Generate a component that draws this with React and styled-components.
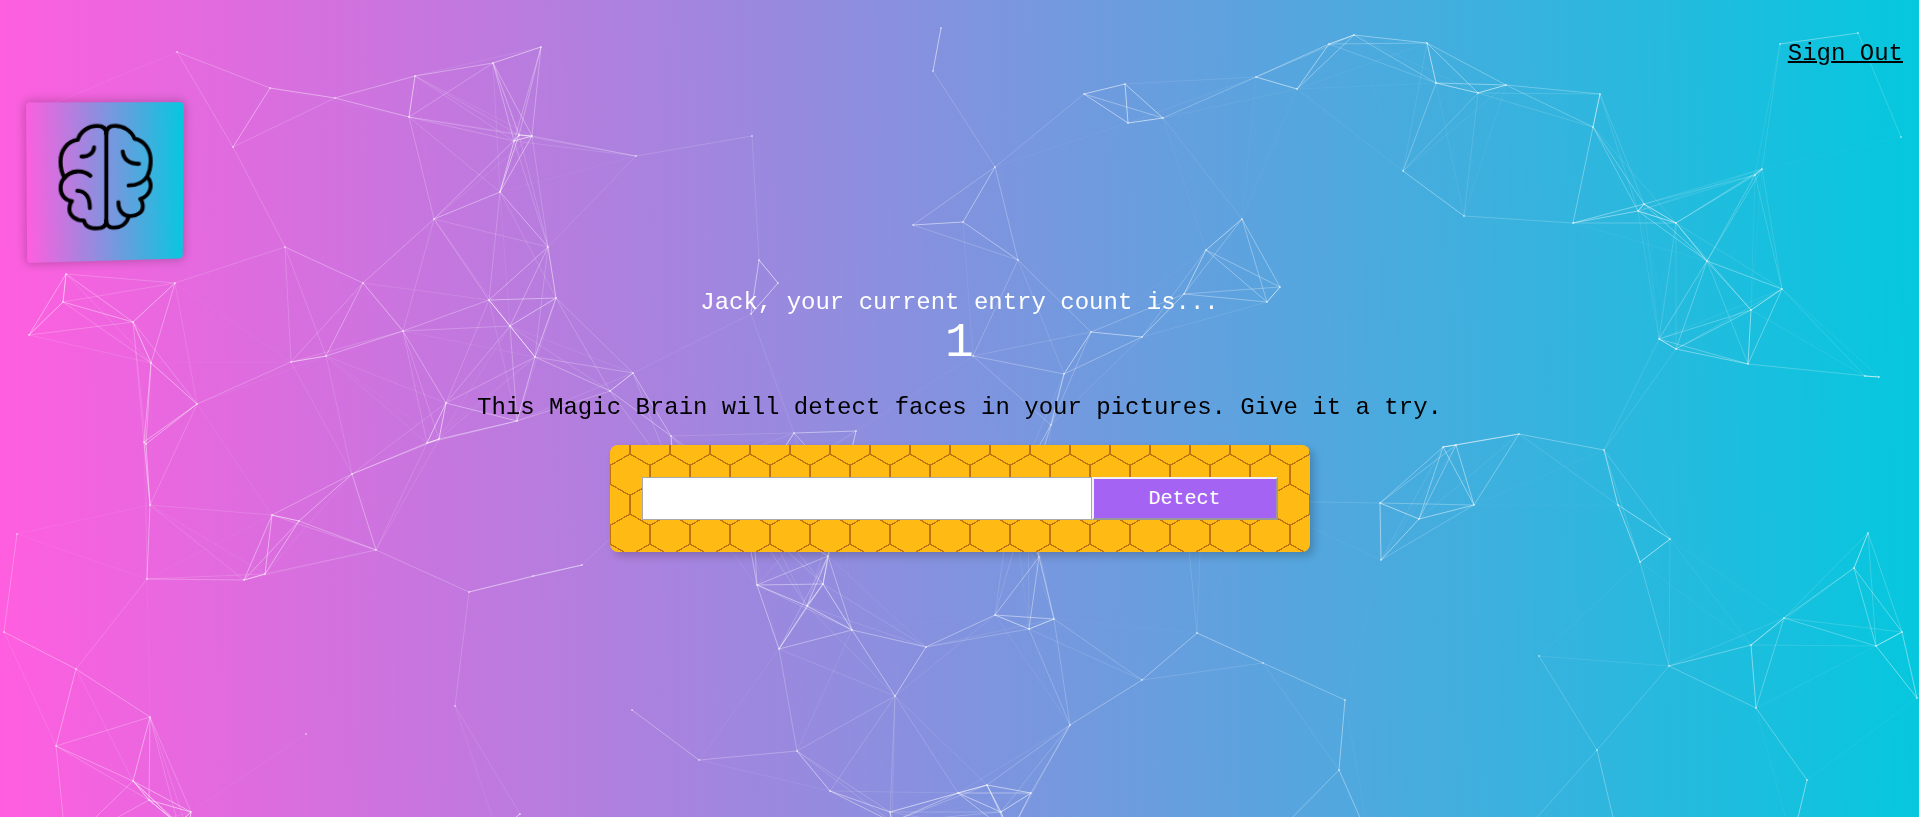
import React from "react";
import styled, { createGlobalStyle } from "styled-components";

const GlobalStyle = createGlobalStyle`
  * { box-sizing: border-box; }
  body {
    margin: 0;
    min-height: 100vh;
    font-family: "Courier New", "Liberation Mono", monospace;
    background: linear-gradient(89deg, #ff5edf 0%, #04c8de 100%) fixed;
  }
`;

const FIELD_WIDTH = 1919;
const FIELD_HEIGHT = 817;
const LINK_DISTANCE = 150;
const LINK_STRENGTH = 0.75;

const PARTICLES = [
  [52, 104], [177, 52], [270, 88], [233, 147], [335, 98], [415, 76], [409, 117],
  [493, 63], [541, 47], [519, 135], [532, 136], [514, 141], [636, 156],
  [500, 192], [434, 219], [548, 247], [285, 247], [363, 283], [66, 274],
  [63, 302], [29, 335], [175, 283], [133, 322], [151, 363], [197, 404],
  [291, 362], [326, 356], [403, 331], [489, 300], [556, 298], [510, 326],
  [535, 357], [633, 373], [610, 391], [446, 403],
  [941, 28], [933, 71], [752, 136], [995, 167], [1084, 94], [1125, 84],
  [1128, 123], [1163, 118], [1256, 77], [913, 225], [963, 222], [1018, 260],
  [759, 260], [778, 283], [751, 314], [973, 356], [1091, 332], [1142, 337],
  [1064, 374], [1242, 219], [1206, 250], [1184, 294], [1267, 302], [1280, 287],
  [1329, 44], [1354, 35], [1427, 43], [1297, 89], [1436, 83], [1478, 93],
  [1506, 85], [1600, 94], [1593, 127], [1403, 171], [1464, 216], [1573, 223],
  [1644, 204], [1638, 211], [1676, 223], [1755, 175], [1762, 169], [1780, 44],
  [1858, 33], [1901, 137], [1707, 261], [1782, 289], [1751, 310], [1659, 339],
  [1676, 349], [1748, 364], [1865, 376], [1879, 377],
  [144, 442], [146, 444], [150, 505], [17, 534], [147, 579], [272, 515],
  [299, 521], [265, 574], [244, 580], [352, 474], [376, 550], [427, 443],
  [439, 439], [517, 421], [469, 592], [533, 576], [582, 565], [4, 632],
  [76, 669], [150, 717], [56, 746], [133, 781], [149, 800], [191, 812],
  [306, 734], [455, 706], [520, 814], [632, 710],
  [671, 436], [794, 433], [856, 431], [1051, 425], [828, 556], [757, 585],
  [823, 584], [807, 606], [779, 649], [852, 630], [926, 647], [995, 615],
  [1029, 629], [1054, 619], [1039, 557], [1197, 633], [1142, 680], [1263, 663],
  [895, 696], [1070, 725], [699, 760], [797, 751], [830, 791], [890, 812],
  [958, 793], [987, 785], [1031, 793], [1001, 812],
  [1443, 447], [1456, 445], [1519, 434], [1604, 450], [1380, 503], [1474, 505],
  [1419, 519], [1381, 560], [1618, 505], [1670, 539], [1640, 562], [1539, 656],
  [1669, 666], [1751, 645], [1784, 618], [1854, 568], [1868, 533], [1876, 646],
  [1902, 632], [1917, 698], [1756, 708], [1807, 780], [1345, 700], [1339, 770],
  [1597, 750],
  [674, 478], [744, 512], [752, 496], [843, 487], [1012, 494], [1028, 500],
  [1185, 508], [1202, 500], [1255, 501],
  [66, 846], [178, 824], [188, 832], [497, 832], [892, 822], [1010, 834],
  [1278, 832], [1369, 838], [1522, 834], [1618, 838], [1792, 842],
];

const LINKS = PARTICLES.flatMap(([x1, y1], i) =>
  PARTICLES.slice(i + 1).flatMap(([x2, y2]) => {
    const distance = Math.hypot(x2 - x1, y2 - y1);
    return distance < LINK_DISTANCE
      ? [{ x1, y1, x2, y2, alpha: LINK_STRENGTH * (1 - distance / LINK_DISTANCE) }]
      : [];
  })
);

const ParticleField = styled.svg`
  position: fixed;
  inset: 0;
  width: 100%;
  height: 100%;
  z-index: -1;
`;

const Nav = styled.nav`
  display: flex;
  justify-content: flex-end;
  padding: 40px 16px;
`;

const SignOutLink = styled.a`
  color: #000;
  font-size: 24px;
  line-height: 27px;
  text-decoration: underline;
  text-decoration-thickness: 2px;
  &:hover { opacity: 0.5; }
`;

const LogoTile = styled.div`
  display: flex;
  justify-content: center;
  align-items: flex-start;
  width: 150px;
  height: 150px;
  margin: 0 31px 32px;
  padding-top: 20px;
  border-radius: 4px;
  background: linear-gradient(89deg, #ff5edf 0%, #04c8de 100%);
  box-shadow: 0 0 8px 2px rgba(0, 0, 0, 0.2);
  transform: perspective(1000px) rotateX(-5deg) rotateY(10deg) scale(1.06);
`;

const BrainIcon = styled.svg`
  width: 90px;
  height: 101px;
  fill: none;
  stroke: #000;
  stroke-width: 12;
  stroke-linecap: round;
  stroke-linejoin: round;
`;

const Main = styled.main`
  text-align: center;
`;

const EntryLabel = styled.div`
  color: #fff;
  font-size: 24px;
  line-height: 27px;
`;

const EntryCount = styled.div`
  color: #fff;
  font-size: 48px;
  line-height: 54px;
`;

const Intro = styled.p`
  margin: 24px 0;
  color: #000;
  font-size: 24px;
  line-height: 27px;
`;

const HoneycombCard = styled.div`
  position: relative;
  width: 100%;
  max-width: 700px;
  margin: 0 auto;
  padding: 32px;
  border-radius: 8px;
  overflow: hidden;
  background: #ffbb14;
  box-shadow: 4px 4px 8px 0 rgba(0, 0, 0, 0.2);
`;

const Honeycomb = styled.svg`
  position: absolute;
  inset: 0;
  width: 100%;
  height: 100%;
`;

const DetectForm = styled.form`
  position: relative;
  display: flex;
  height: 43px;
`;

const UrlInput = styled.input`
  flex: 1;
  min-width: 0;
  padding: 8px;
  border: 1px solid #a9a9a9;
  border-radius: 0;
  background: #fff;
  font: inherit;
  font-size: 20px;
`;

const DetectButton = styled.button`
  width: 186px;
  padding: 8px 16px;
  border: 2px solid;
  border-color: #f2f2f2 #999 #999 #f2f2f2;
  background: #a463f2;
  color: #fff;
  font: inherit;
  font-size: 20px;
  line-height: 23px;
  cursor: pointer;
`;

function Particles() {
  return (
    <ParticleField
      viewBox={`0 0 ${FIELD_WIDTH} ${FIELD_HEIGHT}`}
      preserveAspectRatio="xMidYMid slice"
      aria-hidden="true"
    >
      {LINKS.map(({ alpha, ...ends }, i) => (
        <line key={i} {...ends} stroke="#fff" strokeOpacity={alpha} />
      ))}
      {PARTICLES.map(([x, y], i) => (
        <circle key={i} cx={x} cy={y} r="1" fill="#fff" fillOpacity="0.5" />
      ))}
    </ParticleField>
  );
}

function Logo() {
  return (
    <LogoTile>
      <BrainIcon viewBox="174 130 286 320" role="img" aria-label="Brain">
        <path d="M318 160V420" />
        <path d="M318 160C318 143 308 136 290 136C262 136 238 155 232 177C200 182 180 208 180 242C180 262 185 278 192 290" />
        <path d="M270 285C245 265 210 268 192 290C182 298 180 310 180 322C180 342 195 358 214 360C208 366 206 375 206 384C206 404 225 419 250 419C253 436 268 444 290 444C308 444 318 436 318 420" />
        <path d="M243 227C262 229 280 218 281 200" />
        <path d="M230 329C255 330 268 350 268 382" />
        <path d="M318 160C318 143 328 136 344 136C370 136 395 152 404 175C434 180 454 208 454 244C454 262 449 278 443 290C433 305 415 316 386 316" />
        <path d="M443 290C461 308 459 345 422 358C428 363 430 372 430 382C430 397 412 409 392 409C370 409 355 392 355 366" />
        <path d="M386 412C380 432 362 443 342 443C326 443 318 434 318 420" />
        <path d="M368 213C370 236 388 252 418 251" />
      </BrainIcon>
    </LogoTile>
  );
}

function HoneycombBackdrop() {
  return (
    <Honeycomb aria-hidden="true">
      <defs>
        <pattern id="honeycomb" width="40" height="60" patternUnits="userSpaceOnUse">
          <g fill="none" stroke="#bb7410" shapeRendering="crispEdges">
            <path strokeWidth="2" d="M20 0V9M20 50V60M0 20V39M40 20V39" />
            <path strokeWidth="1.3" d="M0 20.5L20 9L40 20.5M0 39L20 50.5L40 39" />
          </g>
        </pattern>
      </defs>
      <rect width="100%" height="100%" fill="url(#honeycomb)" />
    </Honeycomb>
  );
}

export default function App() {
  return (
    <>
      <GlobalStyle />
      <Particles />
      <Nav>
        <SignOutLink href="#signout">Sign Out</SignOutLink>
      </Nav>
      <Logo />
      <Main>
        <EntryLabel>Jack, your current entry count is...</EntryLabel>
        <EntryCount>1</EntryCount>
        <Intro>This Magic Brain will detect faces in your pictures. Give it a try.</Intro>
        <HoneycombCard>
          <HoneycombBackdrop />
          <DetectForm onSubmit={(event) => event.preventDefault()}>
            <UrlInput type="text" aria-label="Picture URL" />
            <DetectButton type="submit">Detect</DetectButton>
          </DetectForm>
        </HoneycombCard>
      </Main>
    </>
  );
}
